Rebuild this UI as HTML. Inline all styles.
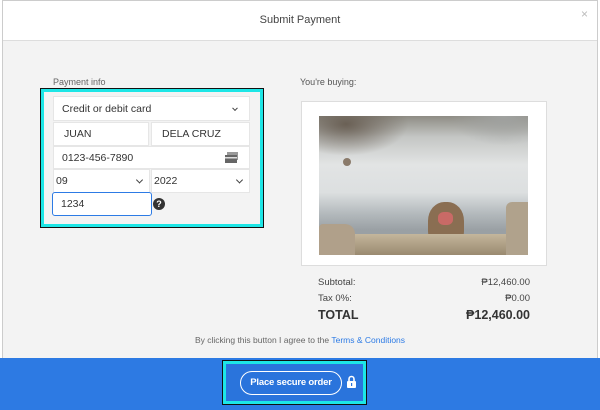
<!DOCTYPE html>
<html><head><style>
*{box-sizing:border-box;margin:0;padding:0}
body{width:600px;height:410px;overflow:hidden;background:#fff;font-family:"Liberation Sans",sans-serif;position:relative;color:#333}
.a{position:absolute}
.f{position:absolute;background:#fff;border:1px solid #e6e6e6;font-size:10.5px;color:#333;padding-left:8px;display:flex;align-items:center}
.chev{position:absolute;right:7px;top:50%;width:5px;height:5px;border-right:1.5px solid #444;border-bottom:1.5px solid #444;transform:translateY(-70%) rotate(45deg)}
</style></head><body>
<div class="a" style="left:2px;top:0;width:596px;height:410px;border:1px solid #ccc;border-bottom:none"></div>
<div class="a" style="left:0;top:14px;width:600px;text-align:center;font-size:11px;color:#444">Submit Payment</div>
<div class="a" style="left:581px;top:7px;font-size:12px;color:#bbb">×</div>
<div class="a" style="left:3px;top:40px;width:594px;height:318px;background:#f3f3f3;border-top:1px solid #ddd"></div>
<div class="a" style="left:53px;top:77px;font-size:9px;color:#666">Payment info</div>
<div class="a" style="left:300px;top:77px;font-size:9px;color:#555">You're buying:</div>
<div class="a" style="left:41px;top:89px;width:222px;height:138px;border:3px solid #1de6e6;outline:1.5px solid #111;background:#f3f3f3"></div>
<div class="f" style="left:53px;top:96px;width:197px;height:25px">Credit or debit card<span class="chev" style="width:4px;height:4px;right:12px"></span></div>
<div class="f" style="left:53px;top:122px;width:96px;height:24px;padding-left:10px">JUAN</div>
<div class="f" style="left:151px;top:122px;width:99px;height:24px;padding-left:10px">DELA CRUZ</div>
<div class="f" style="left:53px;top:146px;width:197px;height:23px">0123-456-7890
<svg class="a" style="right:10px;top:5px" width="15" height="12" viewBox="0 0 15 12"><rect x="3" y="0" width="11" height="8" fill="#999"/><rect x="1" y="3" width="12" height="8" fill="#666"/><rect x="1" y="5" width="12" height="1.5" fill="#ddd"/></svg></div>
<div class="f" style="left:53px;top:169px;width:97px;height:24px;padding-left:2px">09<span class="chev"></span></div>
<div class="f" style="left:151px;top:169px;width:99px;height:24px;padding-left:2px">2022<span class="chev"></span></div>
<div class="f" style="left:52px;top:192px;width:100px;height:24px;border:1.5px solid #2d7be5;border-radius:3px;padding-left:8px">1234</div>
<div class="a" style="left:153px;top:198px;width:12px;height:12px;border-radius:50%;background:#333;color:#fff;font-size:9px;font-weight:bold;text-align:center;line-height:12px">?</div>
<div class="a" style="left:301px;top:101px;width:246px;height:165px;background:#fff;border:1px solid #ddd"></div>
<div class="a" style="left:319px;top:116px;width:209px;height:139px;overflow:hidden;background:linear-gradient(180deg,#8e8c84 0%,#c4c6c4 15%,#e2e4e4 35%,#dcdfe0 55%,#b4babd 70%,#9aa0a4 82%)">
<div class="a" style="left:0;top:0;width:90px;height:40px;background:radial-gradient(ellipse at 30% 20%,#6a6055,transparent 70%)"></div>
<div class="a" style="left:130px;top:0;width:79px;height:30px;background:radial-gradient(ellipse at 70% 0%,#a0a2a0,transparent 70%)"></div>
<div class="a" style="left:24px;top:42px;width:8px;height:8px;border-radius:50%;background:#8a7a6a"></div>
<div class="a" style="left:109px;top:86px;width:36px;height:42px;border-radius:45% 45% 30% 30%;background:#8a6e52"></div>
<div class="a" style="left:119px;top:96px;width:15px;height:13px;border-radius:40%;background:#c96a66"></div>
<div class="a" style="left:0;top:118px;width:209px;height:21px;background:linear-gradient(180deg,#c4b69c,#9a8a70);border-radius:6px 14px 0 0"></div>
<div class="a" style="left:0;top:108px;width:36px;height:31px;background:#b0a08a;border-radius:4px 10px 0 0"></div>
<div class="a" style="left:187px;top:86px;width:22px;height:53px;background:#b0a28c;border-radius:6px 0 0 0"></div>
</div>
<div class="a" style="left:318px;top:277px;font-size:9.5px;color:#444">Subtotal:</div>
<div class="a" style="left:318px;top:293px;font-size:9.5px;color:#444">Tax 0%:</div>
<div class="a" style="left:318px;top:308px;font-size:12.5px;font-weight:bold;color:#333">TOTAL</div>
<div class="a" style="right:70px;top:277px;font-size:9.5px;color:#444">₱12,460.00</div>
<div class="a" style="right:70px;top:293px;font-size:9.5px;color:#444">₱0.00</div>
<div class="a" style="right:70px;top:308px;font-size:12.5px;font-weight:bold;color:#333">₱12,460.00</div>
<div class="a" style="left:0;top:335px;width:600px;text-align:center;font-size:8.5px;color:#666">By clicking this button I agree to the <span style="color:#2d7be5">Terms &amp; Conditions</span></div>
<div class="a" style="left:0;top:358px;width:600px;height:52px;background:#2d7ae3"></div>
<div class="a" style="left:223px;top:361px;width:143px;height:43px;border:3px solid #1de6e6;outline:1.5px solid #111;background:#2a74dc"></div>
<div class="a" style="left:240px;top:371px;width:102px;height:24px;border:1.5px solid #fff;border-radius:12px;color:#fff;font-size:9.5px;font-weight:bold;text-align:center;line-height:21px;letter-spacing:-0.2px">Place secure order</div>
<svg class="a" style="left:346px;top:375px" width="11" height="14" viewBox="0 0 11 14"><path d="M3 6V4a2.5 2.5 0 0 1 5 0v2" stroke="#fff" stroke-width="1.6" fill="none"/><rect x="1" y="6" width="9" height="7" rx="1" fill="#fff"/><rect x="5" y="8" width="1.2" height="3" fill="#2a74dc"/></svg>
</body></html>
